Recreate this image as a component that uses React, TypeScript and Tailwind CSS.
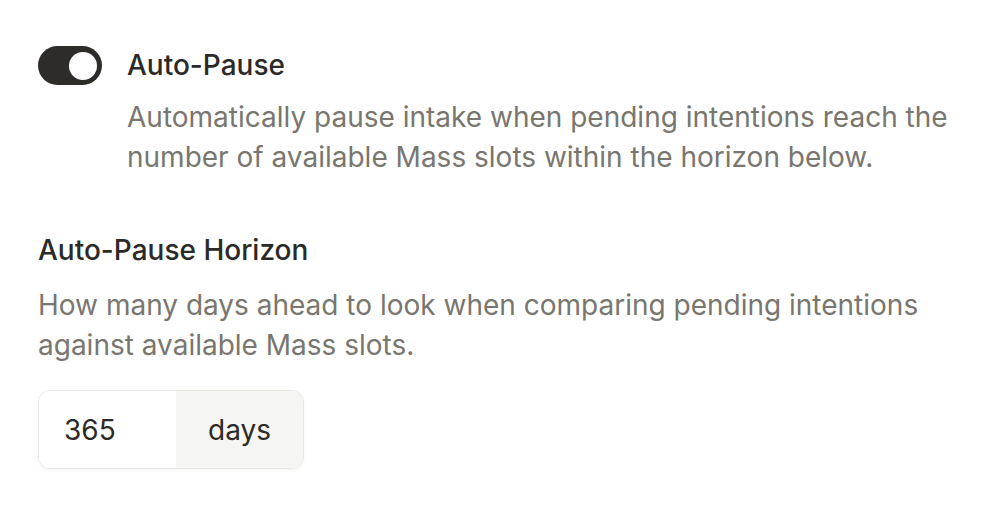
import React, { useState } from 'react';

const App: React.FC = () => {
  const [enabled, setEnabled] = useState(true);
  const [days, setDays] = useState('365');

  return (
    <div className="min-h-screen bg-white pl-[38px] pt-[45px] text-[#2b2a27]" style={{ fontFamily: 'Inter, "Noto Sans", sans-serif' }}>
      <div className="flex items-start gap-[25px]">
        <button
          type="button"
          onClick={() => setEnabled(!enabled)}
          className={`relative mt-px h-[39px] w-[64px] shrink-0 rounded-full ${enabled ? 'bg-[#2d2c29]' : 'bg-[#d9d7d1]'}`}
          aria-pressed={enabled}
        >
          <span
            className={`absolute top-[5.5px] h-[28px] w-[28px] rounded-full bg-white ${enabled ? 'left-[31px]' : 'left-[5px]'}`}
          />
        </button>
        <div>
          <div className="text-[28px] font-medium leading-[40px]">Auto-Pause</div>
          <p className="mt-3 w-[840px] text-[28px] leading-[40px] text-[#78766e]">
            Automatically pause intake when pending intentions reach the number of available Mass slots within the horizon below.
          </p>
        </div>
      </div>

      <div className="mt-[53px]">
        <div className="text-[28px] font-medium leading-[40px]">Auto-Pause Horizon</div>
        <p className="mt-[15px] w-[900px] text-[28px] leading-[40px] text-[#78766e]">
          How many days ahead to look when comparing pending intentions against available Mass slots.
        </p>
        <div className="mt-[25px] flex h-[79px] w-[266px] overflow-hidden rounded-[12px] border border-[#e8e6e0] shadow-[0_2px_3px_rgba(0,0,0,0.04)]">
          <input
            value={days}
            onChange={(e) => setDays(e.target.value)}
            className="w-[137px] bg-white pl-[25px] text-[28px] text-[#2b2a27] outline-none"
          />
          <div className="flex flex-1 items-center justify-center bg-[#f5f5f3] text-[28px] text-[#2b2a27]">days</div>
        </div>
      </div>
    </div>
  );
};

export default App;
